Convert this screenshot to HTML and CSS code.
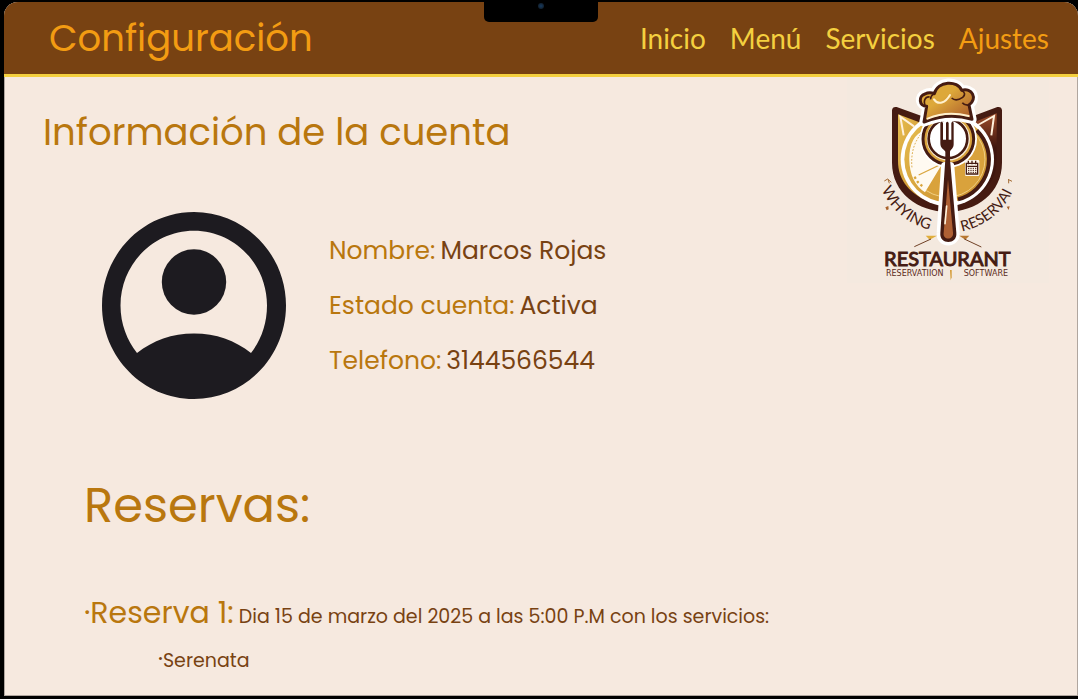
FILE: index.html
```html
<!DOCTYPE html>
<html lang="es">
<head>
<meta charset="utf-8">
<meta name="viewport" content="width=device-width, initial-scale=1">
<title>Configuración</title>
<link rel="stylesheet" href="styles.css">
</head>
<body>
<div class="screen">
  <div class="notch"><span class="camera"></span></div>
  <header class="topbar">
    <h1 class="topbar-title">Configuración</h1>
    <nav class="nav">
      <a class="nav-link" href="#inicio">Inicio</a>
      <a class="nav-link" href="#menu">Menú</a>
      <a class="nav-link" href="#servicios">Servicios</a>
      <a class="nav-link nav-current" href="#ajustes" aria-current="page">Ajustes</a>
    </nav>
  </header>
  <main class="content">
    <div class="overview">
      <section class="account">
        <h2 class="account-title">Información de la cuenta</h2>
        <div class="profile">
          <svg class="avatar" viewBox="0 0 184 187" preserveAspectRatio="none" aria-hidden="true">
            <path fill-rule="evenodd" d="M92 0C142.800 0 184 41.900 184 93.500S142.800 187 92 187 0 145.100 0 93.500 41.200 0 92 0ZM35 141C51 128.500 70 121.500 92 121.500S133 128.500 149 141C159 128 165 112 165 93.500 165 52 132.300 18.700 92 18.700S18.500 52 18.500 93.500C18.500 112 25 128 35 141Z"/>
            <ellipse cx="92" cy="70" rx="32.200" ry="32.700"/>
          </svg>
          <dl class="details">
            <div class="detail"><dt>Nombre:</dt><dd>Marcos Rojas</dd></div>
            <div class="detail"><dt>Estado cuenta:</dt><dd>Activa</dd></div>
            <div class="detail"><dt>Telefono:</dt><dd>3144566544</dd></div>
          </dl>
        </div>
      </section>
      <svg class="logo" viewBox="-69 3 606 618" role="img" aria-label="Restaurant Reservation Software">
        <defs>
          <linearGradient id="gold" x1="0" y1="0" x2="1" y2="1"><stop offset="0" stop-color="#e6bd4f"/><stop offset="1" stop-color="#c98c2d"/></linearGradient>
          <linearGradient id="hat" x1="0" y1="0" x2="1" y2="1"><stop offset=".4" stop-color="#dda83a"/><stop offset="1" stop-color="#a4502a"/></linearGradient>
          <linearGradient id="ear" x1="0" y1="0" x2="0" y2="1"><stop offset="0" stop-color="#a04e2b"/><stop offset=".4" stop-color="#3f160f"/></linearGradient>
          <path id="arc-left" d="M35 341A218 218 0 0 0 232 468"/>
          <path id="arc-right" d="M276 466A216 216 0 0 0 448 240"/>
        </defs>
        <rect x="-69" y="3" width="606" height="618" fill="#f4e9df"/>
        <path fill="#451b12" d="M66 103Q67 91 80 93L155 120H310L382 93Q395 91 396 103V260C396 350 320 407 232 407S66 350 66 260Z"/>
        <path fill="url(#gold)" d="M84 115L160 143V370C115 345 84 310 84 255Z"/>
        <path fill="url(#ear)" d="M380 112L300 143V370C350 345 380 310 380 255Z"/>
        <path fill="none" stroke="#fff0dc" stroke-width="6" d="M101 178L91 122L132 151M364 178L372 120L324 147"/>
        <circle cx="232" cy="250" r="140" fill="#fff"/>
        <circle cx="232" cy="250" r="129" fill="url(#gold)"/>
        <path fill="none" stroke="#451b12" stroke-width="12" d="M320 163A123 123 0 0 1 264 370"/>
        <circle cx="232" cy="250" r="113" fill="#d9a23c" stroke="#f0cf83" stroke-width="3"/>
        <path fill="#fffaf1" d="M215 266L165 349Q119 320 118 250T164 163L190 150Z"/>
        <path fill="none" stroke="#d9a53d" stroke-width="4" d="M146 297L215 264"/>
        <path fill="none" stroke="#d9a53d" stroke-width="3" stroke-dasharray="5 5" d="M152 175Q120 215 126 277"/>
        <path fill="none" stroke="#d9a53d" stroke-width="7" stroke-dasharray="7 8" d="M134 302Q143 324 164 334"/>
        <circle cx="235" cy="189" r="86" fill="#fff"/>
        <circle cx="235" cy="189" r="76" fill="#d9a33d" stroke="#451b12" stroke-width="9"/>
        <circle cx="235" cy="189" r="65" fill="#f9edd7"/>
        <circle cx="234" cy="188" r="58" fill="#fff" stroke="#451b12" stroke-width="8"/>
        <path fill="#fff" stroke="#fff" stroke-width="28" stroke-linejoin="round" d="M162 138L172 88C147 91 145 59 165 54Q178 47 193 53C203 14 263 12 275 43C306 34 324 68 297 87L306 130Q235 108 162 138Z"/>
        <path fill="url(#hat)" stroke="#451b12" stroke-width="9" stroke-linejoin="round" d="M162 138L170 91C146 91 145 59 165 54Q178 47 193 53C203 14 263 12 275 43C306 34 324 68 297 87L306 130Q235 108 162 138Z"/>
        <path fill="none" stroke="#fff0ce" stroke-width="6" stroke-linecap="round" d="M192 70C204 88 226 82 240 57M173 128Q230 103 296 120"/>
        <path fill="none" stroke="#451b12" stroke-width="5" d="M167 92C158 75 166 61 179 63M193 53Q181 59 182 70M275 43Q291 53 278 64Q258 78 245 66M297 87Q284 89 277 80"/>
        <path fill="none" stroke="#fff" stroke-width="24" stroke-linejoin="round" d="M225 270H241L257 470C261 505 208 505 212 470Z"/>
        <path fill="#451b12" d="M211 141Q215 134 219 141V191H228V141Q232 134 236 141V191H244V141Q248 134 251 141V202C252 218 242 220 240 227V250L259 470C263 507 207 507 211 470L226 250V227C222 220 211 218 211 202Z"/>
        <path fill="#ae6034" d="M234 310L249 470C252 493 217 493 221 470Z"/>
        <path fill="none" stroke="#fff1db" stroke-width="5" stroke-linecap="round" d="M230 390L225 443"/>
        <rect x="285" y="252" width="43" height="48" rx="4" fill="#fff8eb"/>
        <path fill="none" stroke="#451b12" stroke-width="4" d="M289 262H323V294H289ZM292 271H321M295 254V265M306 254V265M317 254V265"/>
        <path fill="none" stroke="#451b12" stroke-width="3" stroke-dasharray="4 3" d="M294 277H320M294 283H320M294 289H320"/>
        <g fill="#451b12" font-family="Lato, sans-serif">
          <text font-size="46"><textPath href="#arc-left">WHYING</textPath></text>
          <text font-size="44"><textPath href="#arc-right">RESERVAI</textPath></text>
          <text x="232" y="571" text-anchor="middle" font-size="60" stroke="#451b12" stroke-width="3">RESTAURANT</text>
        </g>
        <path fill="#e0ae3c" d="M167 479H201L179 491Z"/>
        <path fill="#b87832" d="M298 479H268L286 491Z"/>
        <path fill="none" stroke="#704126" stroke-width="3" d="M183 489L133 512M283 489L334 513"/>
        <path fill="none" stroke="#a36a32" stroke-width="3" d="M43 315L53 309L64 319M54 310L58 322M414 310L426 316M416 312V322"/>
        <path fill="#a9622c" d="M46 394L55 390L56 400L50 403ZM410 392L419 391L416 402Z"/>
        <g fill="#5b2b1c" font-family="DejaVu Sans, sans-serif" font-size="24">
          <text x="48" y="599">RESERVATIION</text>
          <text x="414" y="599" text-anchor="end">SOFTWARE</text>
        </g>
        <path fill="#d49b36" d="M240 582H245V604L242 613Z"/>
      </svg>
    </div>
    <section class="bookings">
      <h2 class="bookings-title">Reservas:</h2>
      <p class="booking"><strong class="booking-name">·Reserva 1:</strong> Dia 15 de marzo del 2025 a las 5:00 P.M con los servicios:</p>
      <ul class="services"><li>Serenata</li></ul>
    </section>
  </main>
</div>
</body>
</html>
```
FILE: styles.css
```css
* {
  box-sizing: border-box;
}

body {
  margin: 0;
  padding: 2px 0 3px 4px;
  background: #000;
  color: #784212;
  font-family: Poppins, Inter, sans-serif;
}

h1, h2, p, dl, dd, ul {
  margin: 0;
  font-weight: 400;
}

.screen {
  position: relative;
  min-height: calc(100vh - 5px);
  border-radius: 14px 14px 0 0;
  overflow: hidden;
  background: #f6e9df;
  box-shadow: inset 0 0 0 1px #b0a69f;
}

.notch {
  position: absolute;
  top: 0;
  left: 50%;
  display: flex;
  justify-content: center;
  width: 114px;
  height: 20px;
  margin-left: -57px;
  border-radius: 0 0 5px 5px;
  background: #000;
}

.camera {
  width: 6px;
  height: 6px;
  margin-top: 1px;
  border-radius: 50%;
  background: radial-gradient(#173b60, #101418);
}

.topbar {
  display: flex;
  align-items: center;
  justify-content: space-between;
  height: 75px;
  padding: 0 29px 0 45px;
  border-bottom: 3px solid #f4d03f;
  background: #784212;
}

.topbar-title {
  color: #f39c12;
  font-size: 37px;
  line-height: 48px;
}

.nav {
  display: flex;
  gap: 24px;
  font-family: Lato, sans-serif;
  font-size: 28px;
}

.nav-link {
  color: #f4d03f;
  text-decoration: none;
}

.nav-current {
  color: #f39c12;
}

.overview {
  display: flex;
  justify-content: space-between;
  padding: 0 29px 0 39px;
}

.account-title {
  padding-top: 31px;
  color: #b9770e;
  font-size: 37px;
  line-height: 48px;
}

.profile {
  display: flex;
  align-items: center;
  gap: 43px;
  padding: 56px 0 0 59px;
}

.avatar {
  width: 184px;
  height: 187px;
  fill: #1d1b20;
}

.details {
  font-size: 25px;
  line-height: 55px;
}

.detail {
  display: flex;
  gap: 5px;
}

.detail dt {
  color: #b9770e;
}

.logo {
  flex: none;
  width: 202px;
  height: 206px;
}

.bookings {
  padding: 75px 24px 16px 80px;
}

.bookings-title {
  color: #b9770e;
  font-size: 48px;
  line-height: 64px;
}

.booking {
  padding-top: 51px;
  font-size: 19px;
  line-height: 48px;
}

.booking-name {
  color: #b9770e;
  font-size: 30px;
  font-weight: 400;
}

.services {
  padding: 8px 0 0 74px;
  font-size: 19px;
  line-height: 24px;
  list-style: none;
}

.services li::before {
  content: "•";
  font-size: 12px;
  line-height: 12px;
  vertical-align: 4px;
}
```
